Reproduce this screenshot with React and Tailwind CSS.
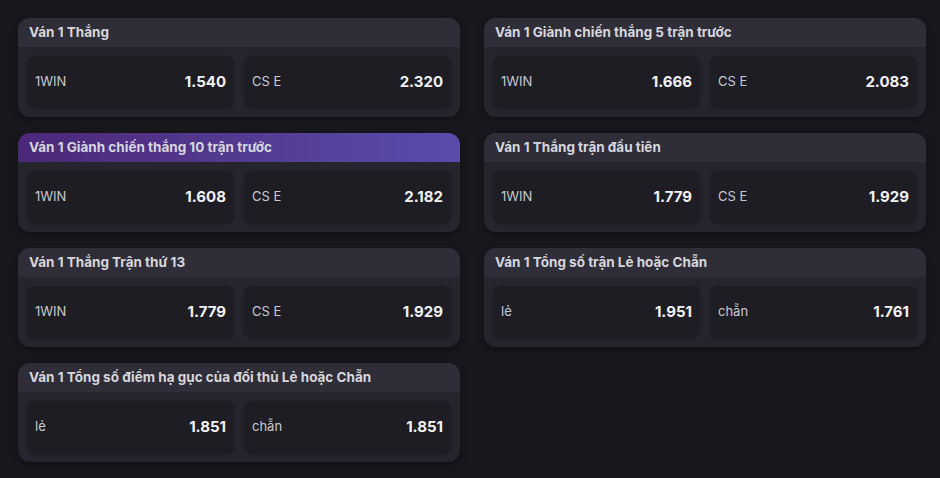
import React from "react";

const leftMarkets = [
  { title: "Ván 1 Thắng", odds: [["1WIN", "1.540"], ["CS E", "2.320"]] },
  { title: "Ván 1 Giành chiến thắng 10 trận trước", odds: [["1WIN", "1.608"], ["CS E", "2.182"]], active: true },
  { title: "Ván 1 Thắng Trận thứ 13", odds: [["1WIN", "1.779"], ["CS E", "1.929"]] },
  { title: "Ván 1 Tổng số điểm hạ gục của đối thủ Lẻ hoặc Chẵn", odds: [["lẻ", "1.851"], ["chẵn", "1.851"]] },
];

const rightMarkets = [
  { title: "Ván 1 Giành chiến thắng 5 trận trước", odds: [["1WIN", "1.666"], ["CS E", "2.083"]] },
  { title: "Ván 1 Thắng trận đầu tiên", odds: [["1WIN", "1.779"], ["CS E", "1.929"]] },
  { title: "Ván 1 Tổng số trận Lẻ hoặc Chẵn", odds: [["lẻ", "1.951"], ["chẵn", "1.761"]] },
];

function MarketCard({ market }) {
  return (
    <div className="bg-[#26252e] rounded-[12px] overflow-hidden shadow-[0_2px_6px_rgba(0,0,0,0.35)]">
      <div
        className={
          market.active
            ? "h-[29px] flex items-center pl-[11px] bg-gradient-to-r from-[#4b2879] to-[#5a4cab]"
            : "h-[29px] flex items-center pl-[11px] bg-[#2e2d38]"
        }
      >
        <span className="text-[13.5px] font-bold text-[#d6d6dc]">{market.title}</span>
      </div>
      <div className="grid grid-cols-2 gap-[10px] px-[9px] pt-[9px] pb-[9px]">
        {market.odds.map(([label, value]) => (
          <button
            key={label}
            className="h-[52px] flex items-center justify-between px-[8px] rounded-[8px] bg-[#1e1d24] shadow-[0_1px_3px_rgba(0,0,0,0.3)]"
          >
            <span className="text-[13px] text-[#c9c9d1]">{label}</span>
            <span className="text-[15px] font-bold text-[#f2f2f5]">{value}</span>
          </button>
        ))}
      </div>
    </div>
  );
}

function App() {
  return (
    <div
      className="w-[940px] h-[478px] bg-[#18171d] overflow-hidden pt-[18px] pl-[18px] flex gap-[24px]"
      style={{ fontFamily: '"Inter", "Noto Sans", sans-serif' }}
    >
      <div className="w-[442px] flex flex-col gap-[16px]">
        {leftMarkets.map((m) => (
          <MarketCard key={m.title} market={m} />
        ))}
      </div>
      <div className="w-[442px] flex flex-col gap-[16px]">
        {rightMarkets.map((m) => (
          <MarketCard key={m.title} market={m} />
        ))}
      </div>
    </div>
  );
}

export default App;
